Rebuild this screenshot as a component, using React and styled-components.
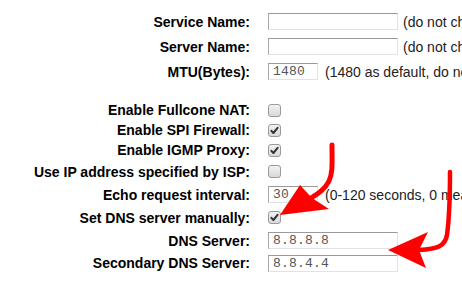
import React from "react"
import styled, { createGlobalStyle } from "styled-components"

const Global = createGlobalStyle`
  html, body {
    margin: 0;
    background: #fff;
    overflow: hidden;
  }
  body {
    font-family: "Liberation Sans", Arial, sans-serif;
  }
`

const Page = styled.div`
  position: relative;
  width: 462px;
  height: 284px;
  padding-top: 9px;
  box-sizing: border-box;
  overflow: hidden;
`

const Form = styled.div`
  display: grid;
  grid-template-columns: 250px 1fr;
  column-gap: 18px;
`

const Label = styled.div`
  height: ${p => p.h}px;
  display: flex;
  align-items: center;
  justify-content: flex-end;
  font-size: 14px;
  font-weight: bold;
  color: #000;
  white-space: nowrap;
`

const Field = styled.div`
  height: ${p => p.h}px;
  display: flex;
  align-items: center;
  white-space: nowrap;
`

const Spacer = styled.div`
  grid-column: 1 / 3;
  height: ${p => p.h}px;
`

const Input = styled.div`
  box-sizing: border-box;
  width: ${p => (p.short ? 50 : 130)}px;
  height: 17px;
  border-style: solid;
  border-width: 1px;
  border-color: #999 #e2e2e2 #e2e2e2 #a8a8a8;
  background: #fff;
  font-family: "Liberation Mono", "Courier New", monospace;
  font-size: 13px;
  letter-spacing: 0.2px;
  color: #555;
  line-height: 15px;
  padding-left: 4px;
  flex: none;
`

const Hint = styled.span`
  margin-left: ${p => (p.short ? 7 : 5)}px;
  font-size: 14px;
  color: #222;
`

const Box = styled.span`
  box-sizing: border-box;
  width: 13px;
  height: 13px;
  border: 1px solid #9a9a9a;
  border-radius: 3px;
  background: linear-gradient(#f2f2f2, #d8d8d8);
  display: flex;
  align-items: center;
  justify-content: center;
  flex: none;
`

const Overlay = styled.svg`
  position: absolute;
  left: 0;
  top: 0;
  pointer-events: none;
`

function Check({ on }) {
  return (
    <Box>
      {on && (
        <svg width="11" height="11" viewBox="0 0 11 11">
          <path d="M2.4 5.8 L4.4 8 L8.6 2.8" fill="none" stroke="#333" strokeWidth="2" strokeLinecap="round" strokeLinejoin="round" />
        </svg>
      )}
    </Box>
  )
}

const rows = [
  { label: "Service Name:", h: 25, input: "", hint: "(do not change unless required by ISP)" },
  { label: "Server Name:", h: 25, input: "", hint: "(do not change unless required by ISP)" },
  { label: "MTU(Bytes):", h: 25, input: "1480", short: true, hint: "(1480 as default, do not change unless necessary.)" },
  { spacer: 16 },
  { label: "Enable Fullcone NAT:", h: 20, check: false },
  { label: "Enable SPI Firewall:", h: 20, check: true },
  { label: "Enable IGMP Proxy:", h: 20, check: true },
  { label: "Use IP address specified by ISP:", h: 23, check: false },
  { label: "Echo request interval:", h: 23, input: "30", short: true, hint: "(0-120 seconds, 0 means no request)" },
  { label: "Set DNS server manually:", h: 23, check: true },
  { label: "DNS Server:", h: 23, input: "8.8.8.8" },
  { label: "Secondary DNS Server:", h: 22, input: "8.8.4.4" },
]

export default function App() {
  return (
    <Page>
      <Global />
      <Form>
        {rows.map((r, i) =>
          r.spacer ? (
            <Spacer key={i} h={r.spacer} />
          ) : (
            <React.Fragment key={i}>
              <Label h={r.h}>{r.label}</Label>
              <Field h={r.h}>
                {r.check !== undefined ? (
                  <Check on={r.check} />
                ) : (
                  <>
                    <Input short={r.short}>{r.input}</Input>
                    {r.hint && <Hint short={r.short}>{r.hint}</Hint>}
                  </>
                )}
              </Field>
            </React.Fragment>
          )
        )}
      </Form>
      <Overlay width="462" height="284" viewBox="0 0 462 284">
        <path d="M332 145 C332 162 333 173 329 181 C325 189 319 193 311 198" fill="none" stroke="#f00" strokeWidth="5" strokeLinecap="round" />
        <polygon points="280,215 300,185 312,198 329,209" fill="#f00" />
        <path d="M450 172 C450 196 449 220 447 235 C445 246 438 249 419 250" fill="none" stroke="#f00" strokeWidth="4.5" strokeLinecap="round" />
        <polygon points="388,250 428,232 419,250 426,268" fill="#f00" />
      </Overlay>
    </Page>
  )
}
